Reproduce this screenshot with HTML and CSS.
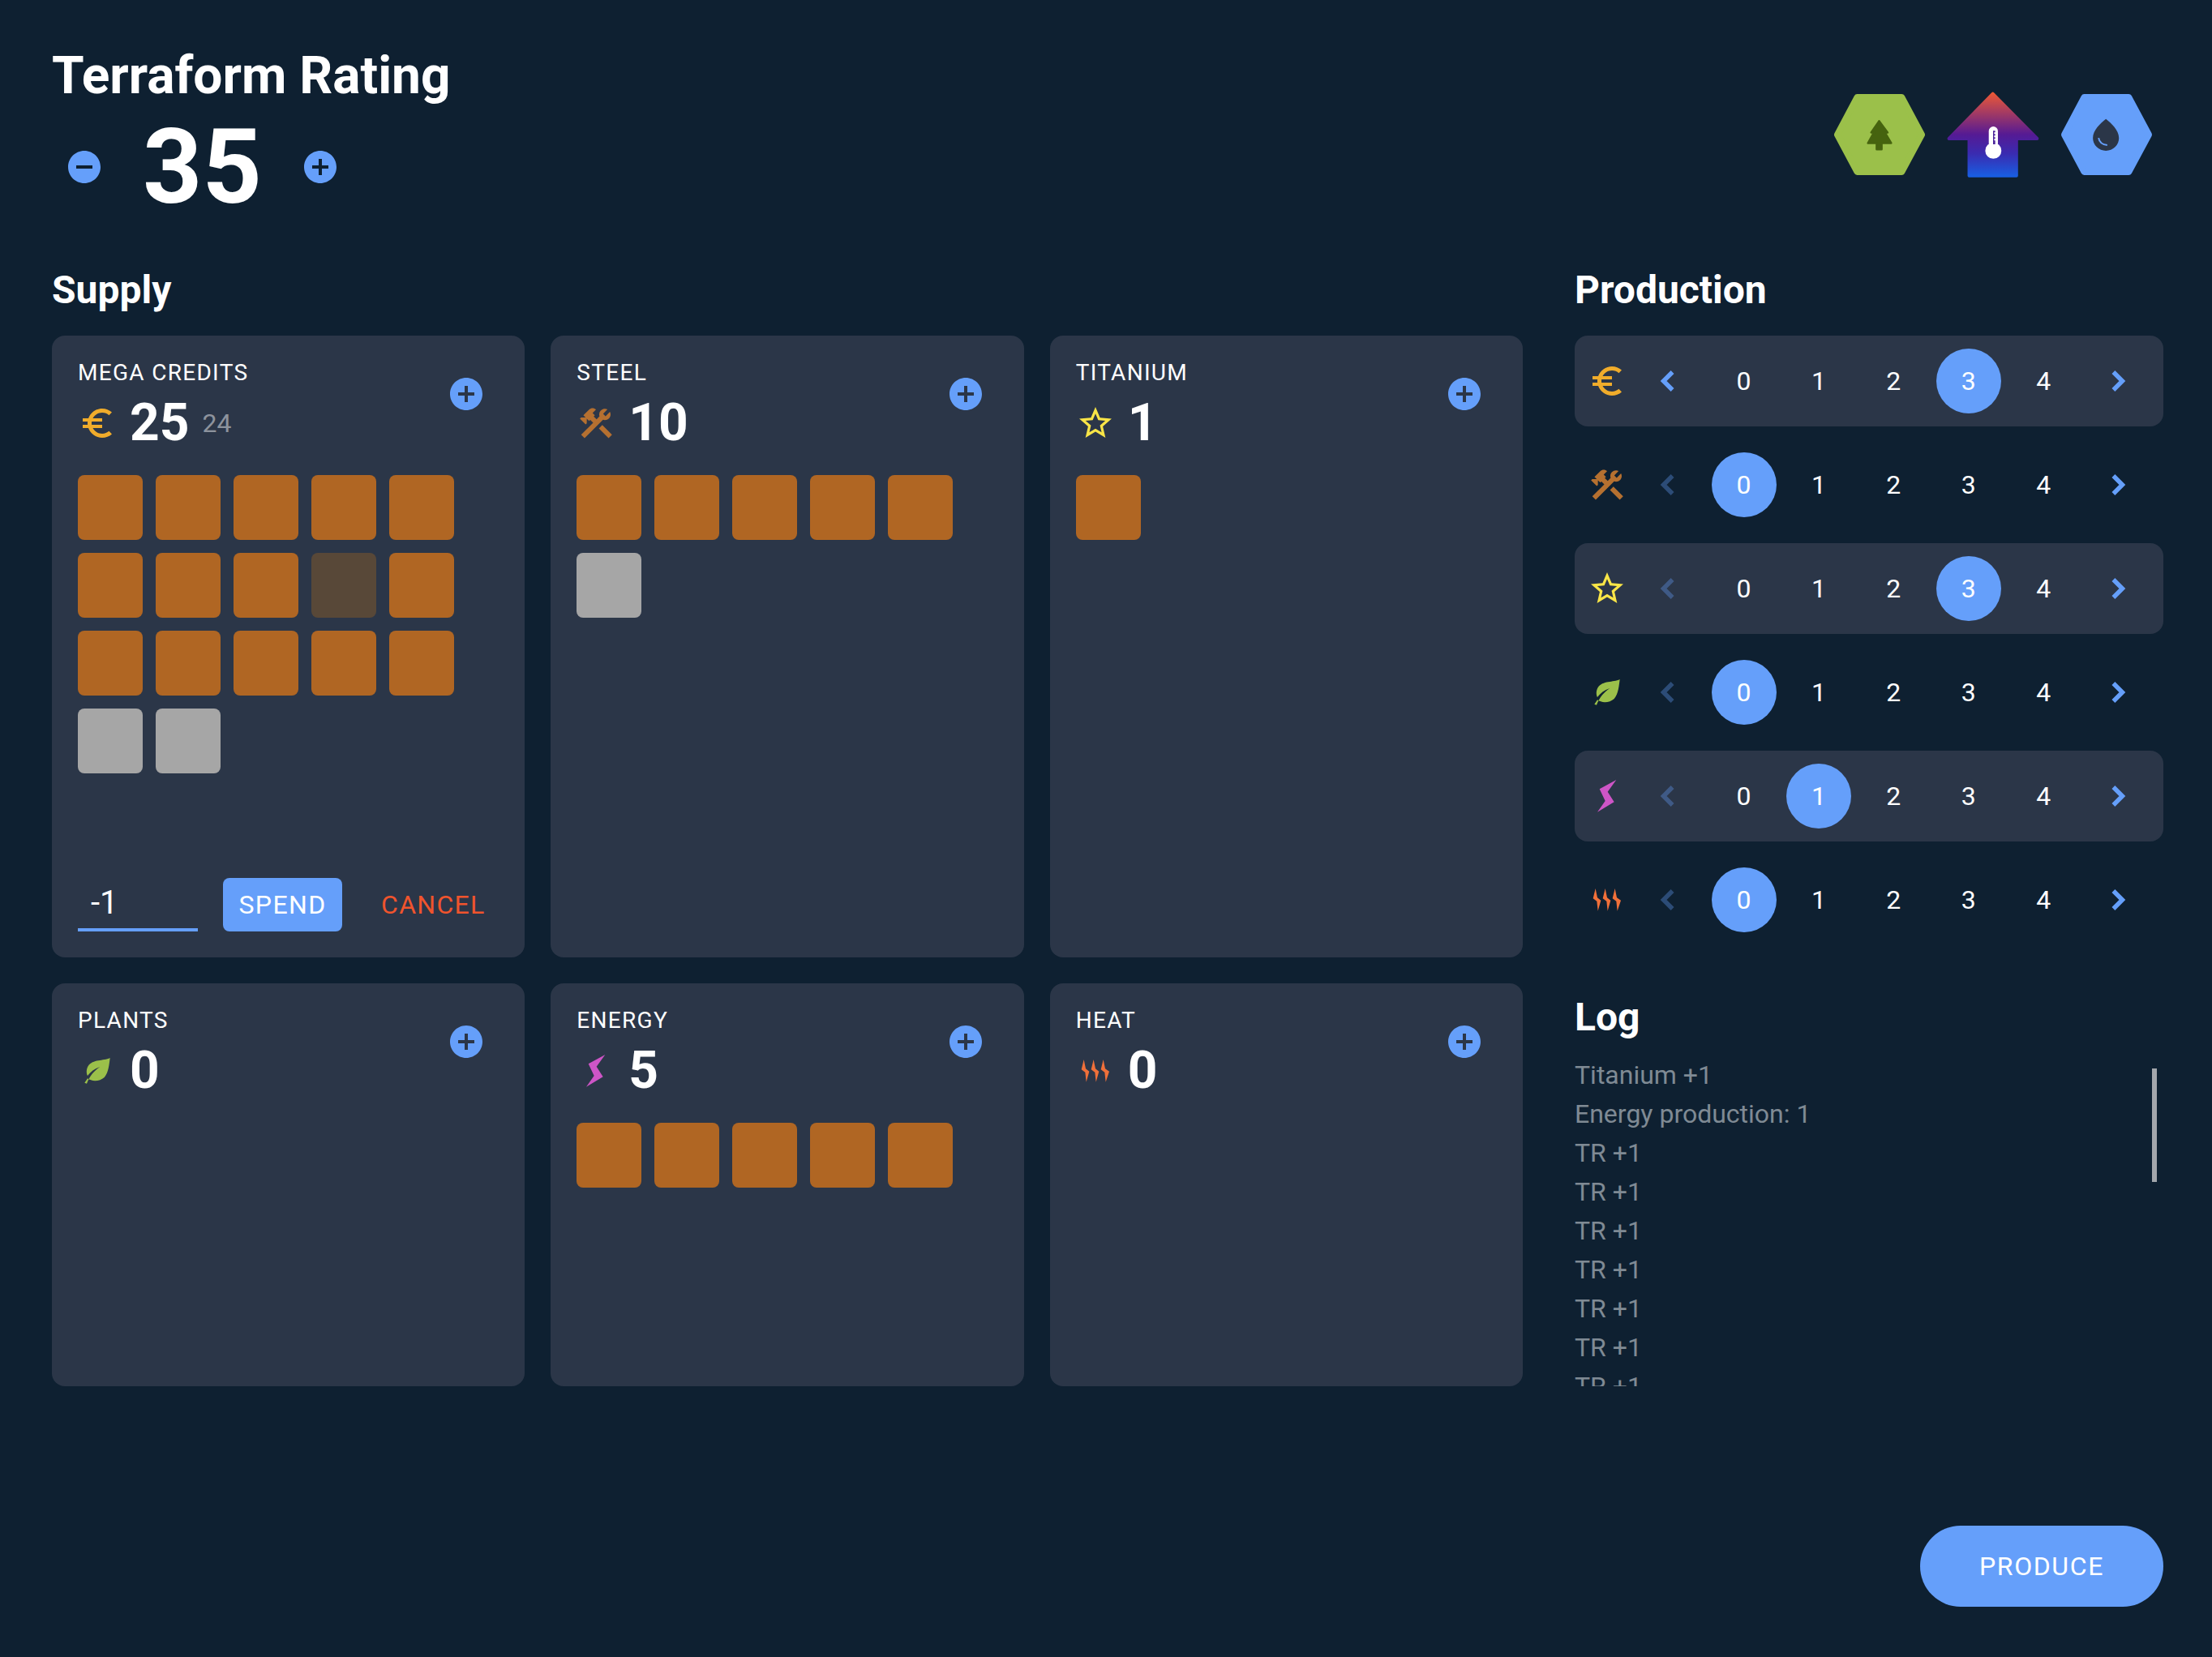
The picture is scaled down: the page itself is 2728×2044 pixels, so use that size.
FILE: index.html
```html
<!DOCTYPE html>
<html lang="en">
<head>
<meta charset="utf-8" />
<title>Terraform Rating</title>
<link rel="stylesheet" href="styles.css">
</head>
<body>

<!-- shared icons -->
<svg class="defs" aria-hidden="true">
  <symbol id="i-plus" viewBox="2 2 20 20"><path d="M12 2C6.48 2 2 6.48 2 12s4.48 10 10 10 10-4.48 10-10S17.52 2 12 2zm5 11h-4v4h-2v-4H7v-2h4V7h2v4h4v2z"/></symbol>
  <symbol id="i-minus" viewBox="2 2 20 20"><path d="M12 2C6.48 2 2 6.48 2 12s4.48 10 10 10 10-4.48 10-10S17.52 2 12 2zm5 11H7v-2h10v2z"/></symbol>
  <symbol id="i-euro" viewBox="0 0 24 24"><path d="M15 18.5c-2.51 0-4.68-1.42-5.76-3.5H15v-2H8.58c-.05-.33-.08-.66-.08-1s.03-.67.08-1H15V9H9.24C10.32 6.92 12.5 5.5 15 5.5c1.61 0 3.09.59 4.23 1.57L21 5.3C19.41 3.87 17.3 3 15 3c-3.92 0-7.24 2.51-8.48 6H3v2h3.06c-.04.33-.06.66-.06 1 0 .34.02.67.06 1H3v2h3.52c1.24 3.49 4.56 6 8.48 6 2.31 0 4.41-.87 6-2.3l-1.78-1.77c-1.13.98-2.6 1.57-4.22 1.57z"/></symbol>
  <symbol id="i-steel" viewBox="0 0 24 24"><path d="M13.78 15.3L19.78 21.3L21.89 19.14L15.89 13.14L13.78 15.3M17.5 10.1C17.11 10.1 16.69 10.05 16.36 9.91L4.97 21.25L2.86 19.14L10.27 11.74L8.5 9.96L7.78 10.66L6.33 9.25V12.11L5.63 12.81L2.11 9.25L2.81 8.55H5.62L4.22 7.14L7.78 3.58C8.95 2.41 10.83 2.41 12 3.58L9.89 5.74L11.3 7.14L10.59 7.85L12.38 9.63L14.2 7.75C14.06 7.42 14 7 14 6.63C14 4.66 15.56 3.11 17.5 3.11C18.09 3.11 18.61 3.25 19.08 3.53L16.41 6.2L17.91 7.7L20.58 5.03C20.86 5.5 21 6 21 6.63C21 8.59 19.45 10.1 17.5 10.1Z"/></symbol>
  <symbol id="i-star" viewBox="0 0 24 24"><path d="M22 9.24l-7.19-.62L12 2 9.19 8.63 2 9.24l5.46 4.73L5.82 21 12 17.27 18.18 21l-1.63-7.03L22 9.24zM12 15.4l-3.76 2.27 1-4.28-3.32-2.88 4.38-.38L12 6.1l1.71 4.04 4.38.38-3.32 2.88 1 4.28L12 15.4z"/></symbol>
  <symbol id="i-leaf" viewBox="84 150 144 144"><path d="M203 174C178 186 140 178 122 204C114 218 116 232 120 240C130 226 146 214 166 207C146 220 128 240 117 269L109 266L120 250C135 262 165 262 182 246C198 228 200 196 203 174Z"/></symbol>
  <symbol id="i-bolt" viewBox="84 534 144 144"><path d="M190 546L128 580L149 624L120 665L182 628L158 590Z"/></symbol>
  <symbol id="i-heat" viewBox="84 918 144 144"><path d="M113 948L104 985L118 995L122 1031L133 992L120 982ZM149 948L140 985L154 995L158 1031L169 992L156 982ZM185 948L176 985L190 995L194 1031L207 992L192 982Z"/></symbol>
  <symbol id="i-prev" viewBox="0 0 24 24"><path d="M14.5 6l-6 6 6 6" fill="none" stroke="currentColor" stroke-width="3"/></symbol>
  <symbol id="i-next" viewBox="0 0 24 24"><path d="M9.5 6l6 6-6 6" fill="none" stroke="currentColor" stroke-width="3"/></symbol>
</svg>

<div class="page">

  <header class="top">
    <div>
      <h1 class="title">Terraform Rating</h1>
      <div class="rating">
        <svg class="round-btn"><use href="#i-minus"/></svg>
        <span class="rating-val">35</span>
        <svg class="round-btn"><use href="#i-plus"/></svg>
      </div>
    </div>
    <div class="globals">
      <svg class="hex" viewBox="181 108 339 299">
        <polygon points="268,120 432,120 506,258 432,395 268,395 195,258" fill="#9bc04a" stroke="#9bc04a" stroke-width="24" stroke-linejoin="round"/>
        <polygon points="349,208 320,250 330,250 308,289 340,289 340,312 358,312 358,289 393,289 370,250 380,250" fill="#46630f" stroke="#46630f" stroke-width="8" stroke-linejoin="round"/>
      </svg>
      <svg class="temp" viewBox="595 98 344 320">
        <defs>
          <linearGradient id="temp-grad" gradientUnits="userSpaceOnUse" x1="0" y1="98" x2="0" y2="418">
            <stop offset="0" stop-color="#f05a33"/>
            <stop offset="0.5" stop-color="#551a94"/>
            <stop offset="0.72" stop-color="#3a2bb0"/>
            <stop offset="1" stop-color="#1760e4"/>
          </linearGradient>
        </defs>
        <polygon points="766,106 603,273 678,273 678,411 854,411 854,273 931,273" fill="url(#temp-grad)" stroke="url(#temp-grad)" stroke-width="12" stroke-linejoin="round"/>
        <circle cx="768" cy="318" r="30" fill="#fff"/>
        <rect x="751" y="228" width="34" height="80" rx="17" fill="#fff"/>
        <path d="M767 244h8v6h-4v6h4v6h-4v6h4v6h-4v6h4v14h-8z" fill="#4a2399"/>
      </svg>
      <svg class="hex" viewBox="181 108 339 299">
        <polygon points="268,120 432,120 506,258 432,395 268,395 195,258" fill="#659ffa" stroke="#659ffa" stroke-width="24" stroke-linejoin="round"/>
        <path d="M348 200C330 215 300 240 300 270A48 47 0 0 0 396 270C396 240 366 215 348 200Z" fill="#2b3648"/>
        <path d="M321 270Q325 294 353 296" fill="none" stroke="#659ffa" stroke-width="6"/>
      </svg>
    </div>
  </header>

  <div class="board">

    <section>
      <h2 class="section-title">Supply</h2>
      <div class="cards">

        <div class="card">
          <div class="card-head">
            <div>
              <div class="card-label">MEGA CREDITS</div>
              <div class="card-value">
                <svg class="res-icon c-euro"><use href="#i-euro"/></svg>
                <span class="num">25</span><span class="num-sub">24</span>
              </div>
            </div>
            <svg class="round-btn card-add"><use href="#i-plus"/></svg>
          </div>
          <div class="cubes">
            <i class="cube"></i><i class="cube"></i><i class="cube"></i><i class="cube"></i><i class="cube"></i>
            <i class="cube"></i><i class="cube"></i><i class="cube"></i><i class="cube spent"></i><i class="cube"></i>
            <i class="cube"></i><i class="cube"></i><i class="cube"></i><i class="cube"></i><i class="cube"></i>
            <i class="cube grey"></i><i class="cube grey"></i>
          </div>
          <div class="spend-row">
            <input class="spend-input" type="text" value="-1">
            <button class="btn-spend">SPEND</button>
            <button class="btn-cancel">CANCEL</button>
          </div>
        </div>

        <div class="card">
          <div class="card-head">
            <div>
              <div class="card-label">STEEL</div>
              <div class="card-value">
                <svg class="res-icon c-steel"><use href="#i-steel"/></svg>
                <span class="num">10</span>
              </div>
            </div>
            <svg class="round-btn card-add"><use href="#i-plus"/></svg>
          </div>
          <div class="cubes">
            <i class="cube"></i><i class="cube"></i><i class="cube"></i><i class="cube"></i><i class="cube"></i>
            <i class="cube grey"></i>
          </div>
        </div>

        <div class="card">
          <div class="card-head">
            <div>
              <div class="card-label">TITANIUM</div>
              <div class="card-value">
                <svg class="res-icon c-star"><use href="#i-star"/></svg>
                <span class="num">1</span>
              </div>
            </div>
            <svg class="round-btn card-add"><use href="#i-plus"/></svg>
          </div>
          <div class="cubes">
            <i class="cube"></i>
          </div>
        </div>

        <div class="card">
          <div class="card-head">
            <div>
              <div class="card-label">PLANTS</div>
              <div class="card-value">
                <svg class="res-icon c-leaf"><use href="#i-leaf"/></svg>
                <span class="num">0</span>
              </div>
            </div>
            <svg class="round-btn card-add"><use href="#i-plus"/></svg>
          </div>
        </div>

        <div class="card">
          <div class="card-head">
            <div>
              <div class="card-label">ENERGY</div>
              <div class="card-value">
                <svg class="res-icon c-bolt"><use href="#i-bolt"/></svg>
                <span class="num">5</span>
              </div>
            </div>
            <svg class="round-btn card-add"><use href="#i-plus"/></svg>
          </div>
          <div class="cubes">
            <i class="cube"></i><i class="cube"></i><i class="cube"></i><i class="cube"></i><i class="cube"></i>
          </div>
        </div>

        <div class="card">
          <div class="card-head">
            <div>
              <div class="card-label">HEAT</div>
              <div class="card-value">
                <svg class="res-icon c-heat"><use href="#i-heat"/></svg>
                <span class="num">0</span>
              </div>
            </div>
            <svg class="round-btn card-add"><use href="#i-plus"/></svg>
          </div>
        </div>

      </div>
    </section>

    <section>
      <h2 class="section-title">Production</h2>

      <div class="prod-row shaded">
        <svg class="prod-icon c-euro"><use href="#i-euro"/></svg>
        <svg class="arrow"><use href="#i-prev"/></svg>
        <span>0</span><span>1</span><span>2</span><span class="on">3</span><span>4</span>
        <svg class="arrow"><use href="#i-next"/></svg>
      </div>
      <div class="prod-row">
        <svg class="prod-icon c-steel"><use href="#i-steel"/></svg>
        <svg class="arrow off"><use href="#i-prev"/></svg>
        <span class="on">0</span><span>1</span><span>2</span><span>3</span><span>4</span>
        <svg class="arrow"><use href="#i-next"/></svg>
      </div>
      <div class="prod-row shaded">
        <svg class="prod-icon c-star"><use href="#i-star"/></svg>
        <svg class="arrow off"><use href="#i-prev"/></svg>
        <span>0</span><span>1</span><span>2</span><span class="on">3</span><span>4</span>
        <svg class="arrow"><use href="#i-next"/></svg>
      </div>
      <div class="prod-row">
        <svg class="prod-icon c-leaf"><use href="#i-leaf"/></svg>
        <svg class="arrow off"><use href="#i-prev"/></svg>
        <span class="on">0</span><span>1</span><span>2</span><span>3</span><span>4</span>
        <svg class="arrow"><use href="#i-next"/></svg>
      </div>
      <div class="prod-row shaded">
        <svg class="prod-icon c-bolt"><use href="#i-bolt"/></svg>
        <svg class="arrow off"><use href="#i-prev"/></svg>
        <span>0</span><span class="on">1</span><span>2</span><span>3</span><span>4</span>
        <svg class="arrow"><use href="#i-next"/></svg>
      </div>
      <div class="prod-row">
        <svg class="prod-icon c-heat"><use href="#i-heat"/></svg>
        <svg class="arrow off"><use href="#i-prev"/></svg>
        <span class="on">0</span><span>1</span><span>2</span><span>3</span><span>4</span>
        <svg class="arrow"><use href="#i-next"/></svg>
      </div>

      <h2 class="section-title log-title">Log</h2>
      <div class="log">
        <div>Titanium +1</div>
        <div>Energy production: 1</div>
        <div>TR +1</div>
        <div>TR +1</div>
        <div>TR +1</div>
        <div>TR +1</div>
        <div>TR +1</div>
        <div>TR +1</div>
        <div>TR +1</div>
        <i class="log-scroll"></i>
      </div>
    </section>

  </div>

  <div class="foot">
    <button class="btn-produce">PRODUCE</button>
  </div>

</div>
</body>
</html>
```

FILE: styles.css
```css
* { box-sizing: border-box; }

html, body {
    margin: 0;
    background: #0e2031;
}
body {
    color: #fff;
    font-family: Roboto, "Noto Sans", sans-serif;
}
.defs { display: none; }

.page { padding: 62px 60px 0 64px; }

/* header */
.top {
    display: flex;
    justify-content: space-between;
    align-items: center;
}
.title {
    margin: 0;
    font-size: 64px;
    line-height: 64px;
    font-weight: 700;
}
.rating {
    display: flex;
    align-items: center;
    height: 128px;
    margin-top: 16px;
    padding-left: 20px;
}
.rating-val {
    width: 251px;
    text-align: center;
    font-size: 128px;
    line-height: 128px;
    font-weight: 700;
}
.round-btn {
    flex: none;
    width: 40px;
    height: 40px;
    fill: #659ffa;
}
.globals {
    display: flex;
    align-items: center;
    gap: 25px;
    margin-right: 13px;
}
.hex { width: 114px; height: 100px; }
.temp { width: 116px; height: 106px; }

/* layout */
.board {
    display: grid;
    grid-template-columns: 1814px 726px;
    gap: 64px;
    margin-top: 64px;
}
.section-title {
    margin: 0 0 32px;
    font-size: 48px;
    line-height: 48px;
    font-weight: 700;
}
.cards {
    display: grid;
    grid-template-columns: repeat(3, 1fr);
    grid-template-rows: 767px 497px;
    gap: 32px;
}

/* resource cards */
.card {
    display: flex;
    flex-direction: column;
    padding: 32px;
    background: #2b3648;
    border-radius: 16px;
}
.card-head {
    display: flex;
    justify-content: space-between;
}
.card-add {
    margin: 20px 20px 0 0;
}
.card-label {
    font-size: 28px;
    line-height: 28px;
    letter-spacing: 1.3px;
}
.card-value {
    display: flex;
    align-items: center;
    height: 66px;
    padding-top: 2px;
    margin-top: 14px;
}
.res-icon {
    flex: none;
    width: 48px;
    height: 48px;
    margin-right: 16px;
}
.num {
    font-size: 64px;
    line-height: 64px;
    font-weight: 700;
}
.num-sub {
    margin-left: 16px;
    font-size: 32px;
    color: #8d939d;
}
.cubes {
    display: grid;
    grid-template-columns: repeat(5, 80px);
    gap: 16px;
    margin-top: 32px;
}
.cube {
    height: 80px;
    background: #b06623;
    border-radius: 8px;
}
.cube.grey { background: #a6a6a6; }
.cube.spent { background: #584838; }

.c-euro { fill: #f0ac2b; }
.c-steel { fill: #b57030; }
.c-star { fill: #f9e547; }
.c-leaf { fill: #9bc04a; }
.c-bolt { fill: #cd55c6; }
.c-heat { fill: #f0703a; }

/* spend form */
.spend-row {
    display: flex;
    align-items: stretch;
    margin-top: auto;
}
.spend-input {
    width: 148px;
    height: 66px;
    padding: 0 16px 2px;
    background: none;
    border: 0;
    border-bottom: 4px solid #659ffa;
    outline: 0;
    color: #fff;
    font-family: inherit;
    font-size: 40px;
}
.btn-spend {
    height: 66px;
    width: 147px;
    margin-left: 31px;
    padding: 0;
    background: #659ffa;
    border: 0;
    border-radius: 8px;
    color: #fff;
    font-family: inherit;
    font-size: 32px;
    letter-spacing: 1.4px;
}
.btn-cancel {
    margin-left: 48px;
    padding: 0;
    background: none;
    border: 0;
    color: #f0542d;
    font-family: inherit;
    font-size: 32px;
    letter-spacing: 1.3px;
}

/* production */
.prod-row {
    display: grid;
    grid-template-columns: 70px repeat(7, 92.4px);
    align-items: center;
    justify-items: center;
    height: 112px;
    margin-bottom: 16px;
    border-radius: 16px;
    font-size: 32px;
}
.prod-row.shaded { background: #2b3648; }
.prod-row span {
    width: 80px;
    height: 80px;
    border-radius: 50%;
    line-height: 80px;
    text-align: center;
}
.prod-row span.on { background: #659ffa; }
.prod-icon {
    width: 48px;
    height: 48px;
    margin-left: 10px;
}
.arrow {
    width: 44px;
    height: 44px;
    color: #659ffa;
}
.arrow.off { opacity: .35; }
.prod-row .arrow:first-of-type { margin-left: 4px; }
.prod-row .arrow:last-child { margin-right: 4px; }

/* log */
.log-title {
    margin: 65px 0 23px;
}
.log {
    position: relative;
    height: 408px;
    overflow: hidden;
    font-size: 32px;
    line-height: 48px;
    color: #7f8a94;
}
.log-scroll {
    position: absolute;
    top: 16px;
    right: 8px;
    width: 6px;
    height: 140px;
    background: #a3a7ac;
}

/* footer button */
.foot {
    display: flex;
    justify-content: flex-end;
    margin-top: 172px;
}
.btn-produce {
    width: 300px;
    height: 100px;
    background: #659ffa;
    border: 0;
    border-radius: 50px;
    color: #fff;
    font-family: inherit;
    font-size: 32px;
    font-weight: 400;
    letter-spacing: 1.6px;
}
```
